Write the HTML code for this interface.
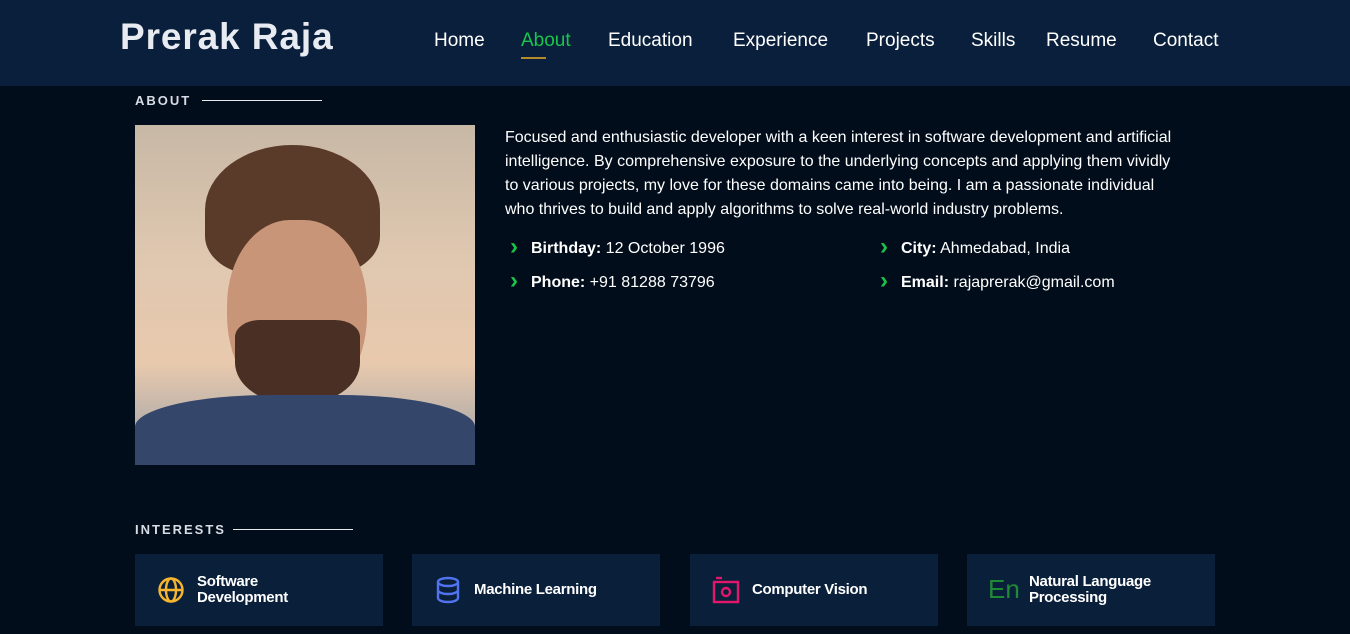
<!DOCTYPE html>
<html><head><meta charset="utf-8"><style>
*{margin:0;padding:0;box-sizing:border-box}
body{width:1350px;height:634px;overflow:hidden;background:#020d1b;font-family:"Liberation Sans",sans-serif;color:#fff;position:relative}
header{position:absolute;left:0;top:0;width:1350px;height:86px;background:#0a1f3b}
.logo{position:absolute;left:120px;top:16px;font-size:37px;font-weight:bold;color:#e8ecf2;letter-spacing:0.9px}
nav{position:absolute;top:30px;font-size:19px;color:#fff}
nav span{position:absolute;white-space:nowrap}
.act{color:#18c54a}
.act:after{content:"";position:absolute;left:0;top:27px;width:25px;height:2px;background:#b58a2a}
.sec{position:absolute;left:135px;font-size:13px;font-weight:bold;letter-spacing:2px;color:#d8dde5}
.sec i{position:absolute;top:7px;height:1px;background:#e8e8e8}
.photo{position:absolute;left:135px;top:125px;width:340px;height:340px;overflow:hidden;
background:linear-gradient(180deg,#c7b8a6 0%,#e0c8b0 40%,#e8c9ad 70%,#9aa0a8 100%)}
.photo .hair{position:absolute;left:70px;top:20px;width:175px;height:130px;border-radius:50% 50% 30% 30%;background:#5a3a28}
.photo .face{position:absolute;left:92px;top:95px;width:140px;height:190px;border-radius:45% 45% 50% 50%;background:#c89578}
.photo .beard{position:absolute;left:100px;top:195px;width:125px;height:85px;border-radius:20% 20% 50% 50%;background:#4a3024}
.photo .shirt{position:absolute;left:0;top:270px;width:340px;height:80px;background:#34466a;border-radius:40% 40% 0 0}
p.desc{position:absolute;left:505px;top:126px;width:760px;font-size:16px;line-height:24px;color:#fff;white-space:nowrap}
.info{position:absolute;font-size:16px}
.info b{font-weight:bold}
.info:before{content:"›";position:absolute;left:-21px;top:-7px;font-size:24px;font-weight:bold;color:#18c54a}
.card{position:absolute;top:554px;width:248px;height:72px;background:#0a1f3a}
.card .t{position:absolute;left:62px;font-size:15px;font-weight:bold;line-height:16px;letter-spacing:-0.3px}
.card svg{position:absolute;left:22px;top:22px}
</style></head><body>
<header>
<div class="logo">Prerak Raja</div>
<nav>
<span style="left:434px">Home</span>
<span class="act" style="left:521px">About</span>
<span style="left:608px">Education</span>
<span style="left:733px">Experience</span>
<span style="left:866px">Projects</span>
<span style="left:971px">Skills</span>
<span style="left:1046px">Resume</span>
<span style="left:1153px">Contact</span>
</nav>
</header>
<div class="sec" style="top:93px">ABOUT<i style="left:67px;width:120px"></i></div>
<div class="photo"><div class="hair"></div><div class="face"></div><div class="beard"></div><div class="shirt"></div></div>
<p class="desc">Focused and enthusiastic developer with a keen interest in software development and artificial<br>intelligence. By comprehensive exposure to the underlying concepts and applying them vividly<br>to various projects, my love for these domains came into being. I am a passionate individual<br>who thrives to build and apply algorithms to solve real-world industry problems.</p>
<div class="info" style="left:531px;top:240px"><b>Birthday:</b> 12 October 1996</div>
<div class="info" style="left:531px;top:274px"><b>Phone:</b> +91 81288 73796</div>
<div class="info" style="left:901px;top:240px"><b>City:</b> Ahmedabad, India</div>
<div class="info" style="left:901px;top:274px"><b>Email:</b> rajaprerak@gmail.com</div>
<div class="sec" style="top:522px">INTERESTS<i style="left:98px;width:120px"></i></div>

<div class="card" style="left:135px"><svg width="28" height="28" viewBox="0 0 28 28" fill="none" stroke="#f5b52e" stroke-width="2.4"><circle cx="14" cy="14" r="11.5"/><ellipse cx="14" cy="14" rx="5" ry="11.5"/><line x1="2.5" y1="14" x2="25.5" y2="14"/></svg><div class="t" style="top:20px">Software<br>Development</div></div>
<div class="card" style="left:412px"><svg width="28" height="28" viewBox="0 0 28 28" fill="none" stroke="#5273f0" stroke-width="2.4"><ellipse cx="14" cy="6" rx="10" ry="4"/><path d="M4 6v16c0 2.2 4.5 4 10 4s10-1.8 10-4V6M4 14c0 2.2 4.5 4 10 4s10-1.8 10-4"/></svg><div class="t" style="top:28px">Machine Learning</div></div>
<div class="card" style="left:690px"><svg width="28" height="28" viewBox="0 0 28 28" fill="none" stroke="#e1176b" stroke-width="2.4"><rect x="2" y="6" width="24" height="20"/><circle cx="14" cy="16" r="4"/><line x1="4" y1="2" x2="10" y2="2"/></svg><div class="t" style="top:28px">Computer Vision</div></div>
<div class="card" style="left:967px"><div style="position:absolute;left:21px;top:20px;font-size:26px;color:#1f8a35">En</div><div class="t" style="top:20px">Natural Language<br>Processing</div></div>
</body></html>
